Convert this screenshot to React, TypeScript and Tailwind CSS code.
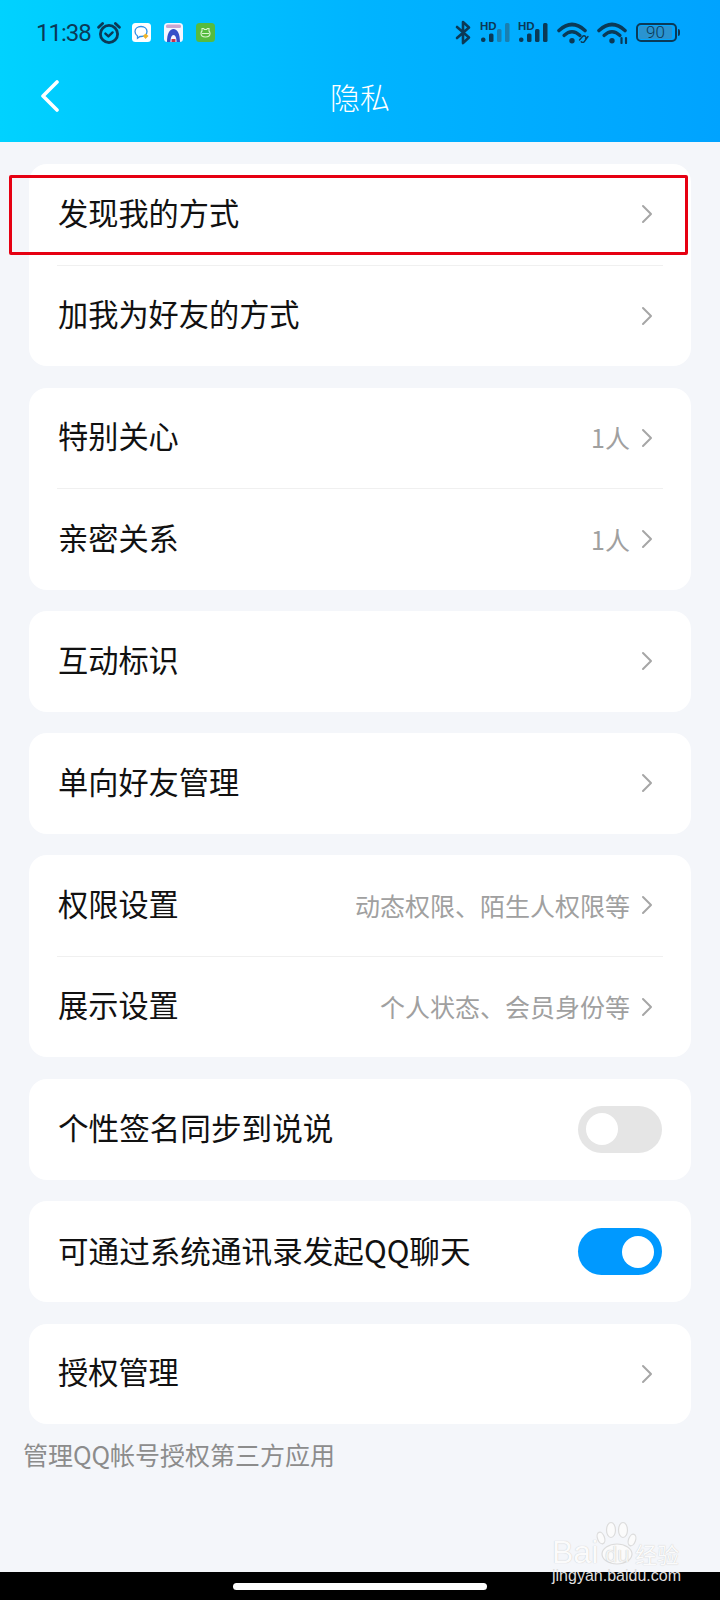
const cjk = "font-['Noto_Sans_CJK_SC','Noto_Sans',sans-serif]";

function Alarm() {
  return (
    <svg width="24" height="24" viewBox="0 0 24 24" fill="none" stroke="#0b3a57" strokeWidth="2.800" strokeLinecap="round" strokeLinejoin="round">
      <circle cx="12" cy="13" r="8.600" />
      <path d="M8.400 12.600l3 2.800 4.200-4" strokeWidth="2.400" />
      <path d="M1.600 6.200L5.600 2.400M22.400 6.200L18.400 2.400" />
    </svg>
  );
}

function ChatApp() {
  return (
    <svg width="19" height="19" viewBox="0 0 19 19">
      <rect width="19" height="19" rx="3.500" fill="#fff" />
      <path d="M9 3.500c3.500 0 6 2.200 6 5s-2.500 5-6 5H8l-2.500 1.800v-2.300C3.900 12 3 10.400 3 8.500c0-2.800 2.500-5 6-5z" fill="none" stroke="#2f8fe8" strokeWidth="1.300" />
      <path d="M13.500 10.500l3 2.500-3 3-2.500-3z" fill="#f0b429" />
    </svg>
  );
}

function SharkApp() {
  return (
    <svg width="19" height="19" viewBox="0 0 19 19">
      <rect width="19" height="19" rx="3.500" fill="#f4f6ff" />
      <rect x="2" y="1.500" width="15" height="3.500" rx="1.500" fill="#c9a6d0" />
      <path d="M3 19c0-8 2.500-13 6.500-13S16 11 16 19h-3.500c0-4-1-7-3-7s-3 3-3 7z" fill="#3550c8" />
      <rect x="7.500" y="16" width="4" height="3" fill="#c8324a" />
    </svg>
  );
}

function FrogApp() {
  return (
    <svg width="19" height="19" viewBox="0 0 19 19">
      <rect width="19" height="19" rx="3.500" fill="#56bb3f" />
      <path d="M6 5.500h1.500l1 1h2l1-1H13v2.500c.8.800 1 1.700 1 2.500 0 2-1.800 3.500-4.500 3.500S5 12.500 5 10.500c0-.8.200-1.700 1-2.500z" fill="none" stroke="#d8f5d0" strokeWidth="1.100" />
      <path d="M6 10.500h7" stroke="#d8f5d0" strokeWidth="1" />
    </svg>
  );
}

function Bluetooth() {
  return (
    <svg width="16" height="25" viewBox="0 0 16 25" fill="none" stroke="#0b3a57" strokeWidth="2.600" strokeLinecap="round" strokeLinejoin="round">
      <path d="M2 7l12 10.500-6 5.500V2l6 5.500L2 18" />
    </svg>
  );
}

function Signal({ dim }: { dim?: boolean }) {
  const weak = dim ? '#1a7fb0' : '#0b3a57';
  return (
    <div className="relative w-[32px] h-[21px]">
      <span className="absolute left-[1px] top-[-1px] text-[11.5px] leading-[11px] font-bold font-['Liberation_Sans',sans-serif] text-[#0b3a57]">HD</span>
      <svg width="32" height="21" viewBox="0 0 32 21">
        <rect x="2" y="15.500" width="4.500" height="4.500" rx="2" fill="#0b3a57" />
        <rect x="10" y="11.500" width="4.500" height="8.500" rx="1.500" fill="#0b3a57" />
        <rect x="18" y="7" width="4.500" height="13" rx="1.500" fill={weak} />
        <rect x="26" y="1" width="4.500" height="19" rx="1.500" fill={weak} />
      </svg>
    </div>
  );
}

function Wifi({ link }: { link?: boolean }) {
  return (
    <svg width="33" height="22" viewBox="0 0 33 22" fill="none" stroke="#0b3a57" strokeLinecap="round">
      <path d="M2 8.500Q15-3.500 28 8.500" strokeWidth="3.600" />
      <path d="M7 13.500Q15 6 23 13.500" strokeWidth="3.200" />
      <circle cx="15" cy="18.800" r="2.700" fill="#0b3a57" stroke="none" />
      {link ? (
        <path d="M22.500 18l3-3.500a2 2 0 0 1 3 0 2 2 0 0 1 0 2.500M31 14.500l-3.800 5.200a2 2 0 0 1-3 0" strokeWidth="1.400" />
      ) : (
        <path d="M24.500 16v5M29 21v-5" strokeWidth="2.200" />
      )}
    </svg>
  );
}

function Battery() {
  return (
    <div className="flex items-center gap-[1px]">
      <div className="w-[41px] h-[19px] rounded-[5px] border-2 border-[#0b3a57] p-[1px] flex">
        <div className="w-[33px] h-full rounded-[2px] bg-[#2a93d0] flex items-center justify-center text-[17px] leading-none font-light text-[#0b3a57] font-['Roboto',sans-serif]">90</div>
      </div>
      <div className="w-[2px] h-[7px] rounded-r bg-[#0b3a57]" />
    </div>
  );
}

function StatusBar() {
  return (
    <div className="h-[64px] flex items-center pl-[36px] pr-[40px] pt-[1px]">
      <span className="text-[24px] leading-none tracking-[-1px] text-[#0b3a57] font-['Roboto',sans-serif] mr-[6px]">11:38</span>
      <Alarm />
      <div className="flex items-center gap-[13px] ml-[11px]">
        <ChatApp />
        <SharkApp />
        <FrogApp />
      </div>
      <div className="ml-auto flex items-center">
        <Bluetooth />
        <div className="ml-[8px]"><Signal dim /></div>
        <div className="ml-[6px]"><Signal /></div>
        <div className="ml-[8px]"><Wifi link /></div>
        <div className="ml-[7px]"><Wifi /></div>
        <div className="ml-[6px]"><Battery /></div>
      </div>
    </div>
  );
}

function Chevron() {
  return (
    <svg className="ml-[11px] mr-[10px] shrink-0" width="12" height="20" viewBox="0 0 12 20" fill="none" stroke="#a6a6a6" strokeWidth="2" strokeLinecap="round" strokeLinejoin="round">
      <path d="M2 2l8 8-8 8" />
    </svg>
  );
}

function Row({ label, value }: { label: string; value?: string }) {
  return (
    <div className="h-[100.5px] flex items-center pl-[1px]">
      <span className="text-[30.2px] leading-none pb-[5px] text-[#111111]">{label}</span>
      <span className="ml-auto text-[25px] leading-none text-[#a0a0a0]">{value}</span>
      <Chevron />
    </div>
  );
}

function Toggle({ on }: { on?: boolean }) {
  return (
    <div className={on ? 'w-[84px] h-[47px] mr-[1px] rounded-full bg-[#0099ff] flex items-center justify-end px-[8px]' : 'w-[84px] h-[47px] mr-[1px] rounded-full bg-[#e5e5e5] flex items-center px-[8px]'}>
      <div className="w-[32px] h-[32px] rounded-full bg-white" />
    </div>
  );
}

function ToggleRow({ label, on }: { label: string; on?: boolean }) {
  return (
    <div className="h-[101px] flex items-center justify-between pl-[1px]">
      <span className="text-[30.6px] leading-none pb-[3px] text-[#111111]">{label}</span>
      <Toggle on={on} />
    </div>
  );
}

function Card({ children }: { children: React.ReactNode }) {
  return <div className="bg-white rounded-[18px] px-[28px]">{children}</div>;
}

function Divider() {
  return <div className="h-px bg-[#f0f0f0]" />;
}

function Watermark() {
  return (
    <div className="absolute left-[552px] top-[1520px] w-[130px] h-[66px] text-[#fbfbfb] pointer-events-none">
      <svg className="absolute left-[44px] top-0" width="42" height="46" viewBox="0 0 42 46" fill="#fbfbfb" stroke="#dcdcdc" strokeWidth="1.200">
        <ellipse cx="5" cy="18" rx="3.500" ry="6" transform="rotate(-20 5 18)" />
        <ellipse cx="15" cy="10" rx="4.500" ry="7.500" />
        <ellipse cx="27" cy="10" rx="4.500" ry="7.500" />
        <ellipse cx="36" cy="20" rx="3.500" ry="6" transform="rotate(20 36 20)" />
        <ellipse cx="21" cy="34" rx="15" ry="10" />
      </svg>
      <span className="absolute left-0 top-[18px] text-[32px] leading-[28px] font-['Liberation_Sans',sans-serif] [text-shadow:0_0_1px_#bdbdbd]">Bai</span>
      <span className="absolute left-[53px] top-[24px] text-[22px] leading-[22px] text-[#f4f4f4] font-['Liberation_Sans',sans-serif] [text-shadow:0_0_1px_#b5b5b5]">du</span>
      <span className={`absolute left-[83px] top-[20px] text-[22px] leading-[26px] whitespace-nowrap [text-shadow:0_0_1px_#bdbdbd] ${cjk}`}>经验</span>
      <span className="absolute left-0 top-[47px] text-[16px] leading-[18px] whitespace-nowrap text-[#dedede] font-['Liberation_Sans',sans-serif]">jingyan.baidu.com</span>
    </div>
  );
}

export default function App() {
  return (
    <div className={`relative w-[720px] h-[1600px] flex flex-col bg-[#f4f6fa] overflow-hidden ${cjk}`}>
      <header className="h-[142px] bg-linear-to-r from-[#00d2ff] via-[#00b4ff] to-[#00a3ff]">
        <StatusBar />
        <div className="h-[64px] grid grid-cols-3 items-center">
          <svg className="ml-[40px]" width="20" height="32" viewBox="0 0 20 32" fill="none" stroke="#fff" strokeWidth="3.600" strokeLinecap="round" strokeLinejoin="round">
            <path d="M17 2L3 16l14 14" />
          </svg>
          <span className="text-center text-[30px] leading-none text-white font-light">隐私</span>
        </div>
      </header>

      <main className="flex-1 px-[29px] pt-[22px] flex flex-col gap-[21.5px]">
        <Card>
          <Row label="发现我的方式" />
          <Divider />
          <Row label="加我为好友的方式" />
        </Card>
        <Card>
          <Row label="特别关心" value="1人" />
          <Divider />
          <Row label="亲密关系" value="1人" />
        </Card>
        <Card>
          <Row label="互动标识" />
        </Card>
        <Card>
          <Row label="单向好友管理" />
        </Card>
        <Card>
          <Row label="权限设置" value="动态权限、陌生人权限等" />
          <Divider />
          <Row label="展示设置" value="个人状态、会员身份等" />
        </Card>
        <Card>
          <ToggleRow label="个性签名同步到说说" />
        </Card>
        <Card>
          <ToggleRow label="可通过系统通讯录发起QQ聊天" on />
        </Card>
        <Card>
          <Row label="授权管理" />
        </Card>
        <p className="-ml-[6px] -mt-[9px] text-[25px] leading-[34px] text-[#8c8c8c]">管理QQ帐号授权第三方应用</p>
      </main>

      <footer className="h-[28px] bg-black flex justify-center pt-[11px]">
        <div className="w-[254px] h-[7px] rounded-full bg-white" />
      </footer>

      {/* annotation drawn over the first row */}
      <div className="absolute left-[9px] top-[175px] w-[679px] h-[80px] border-[3px] border-[#e60012] rounded-[2px]" />
      <Watermark />
    </div>
  );
}
